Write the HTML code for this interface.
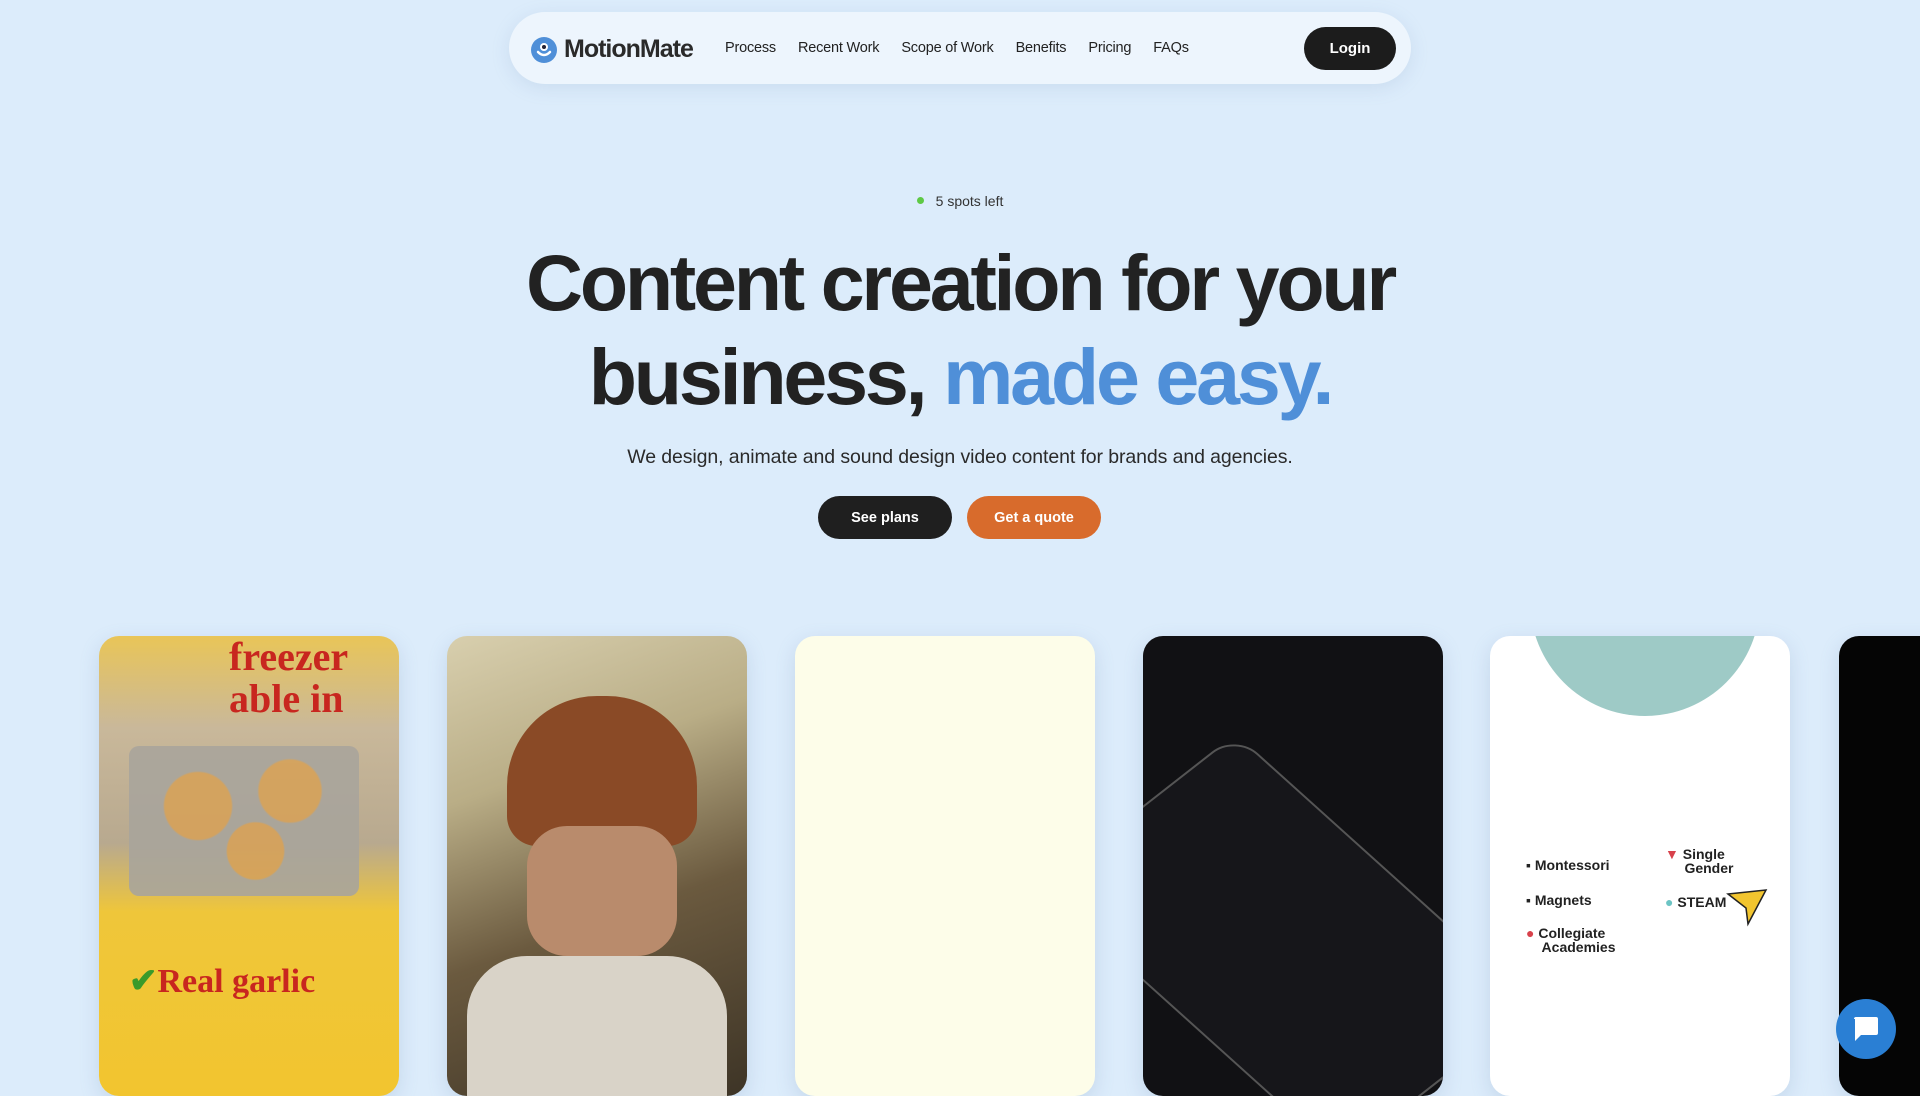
<!DOCTYPE html>
<html><head><meta charset="utf-8"><style>
*{margin:0;padding:0;box-sizing:border-box}
body{width:1920px;height:1080px;overflow:hidden;background:#dcecfb;font-family:"Liberation Sans",sans-serif;color:#222;position:relative}
.nav{position:absolute;left:509px;top:12px;width:902px;height:72px;border-radius:36px;background:#edf5fd;box-shadow:0 4px 18px rgba(120,150,190,.18)}
.logo{position:absolute;left:21px;top:23px;display:flex;align-items:center;font-weight:700;font-size:25px;letter-spacing:-1px;color:#2a2a2a}
.links{position:absolute;left:216px;top:28px;display:flex;gap:22px;font-size:14.5px;letter-spacing:-.2px;color:#222}
.login{position:absolute;right:15px;top:15px;width:92px;height:43px;border-radius:22px;background:#1c1c1c;color:#fff;font-weight:700;font-size:15px;display:flex;align-items:center;justify-content:center}
.spots{position:absolute;top:193px;left:0;width:1920px;text-align:center;font-size:14px;color:#333}
.spots span{display:inline-block;width:7px;height:7px;border-radius:50%;background:#5ec944;margin-right:12px;vertical-align:2px}
h1{position:absolute;left:0;width:1920px;text-align:center;font-size:79px;font-weight:700;letter-spacing:-3.2px;line-height:94px;top:236px;color:#222}
h1 em{font-style:normal;color:#4f8fd8}
.sub{position:absolute;top:446px;width:1920px;text-align:center;font-size:19.5px;letter-spacing:-.1px;color:#2a2a2a}
.btn{position:absolute;top:496px;height:43px;width:134px;border-radius:22px;color:#fff;font-weight:700;font-size:14.5px;display:flex;align-items:center;justify-content:center}
.card{position:absolute;top:636px;width:300px;height:460px;border-radius:20px;overflow:hidden;box-shadow:0 6px 20px rgba(100,130,170,.2)}
.chat{position:absolute;left:1836px;top:999px;width:60px;height:60px;border-radius:50%;background:#2a7fd4;display:flex;align-items:center;justify-content:center}
</style></head><body>
<div class="nav">
 <div class="logo"><svg width="28" height="28" viewBox="0 0 28 28" style="margin-right:6px"><circle cx="14" cy="14" r="13" fill="#4f8fd8"/><circle cx="14" cy="11" r="4" fill="#fff"/><circle cx="14" cy="11" r="2" fill="#223"/><path d="M8 16 q6 6 12 0" stroke="#fff" stroke-width="2.5" fill="none" stroke-linecap="round"/></svg>MotionMate</div>
 <div class="links"><span>Process</span><span>Recent Work</span><span>Scope of Work</span><span>Benefits</span><span>Pricing</span><span>FAQs</span></div>
 <div class="login">Login</div>
</div>
<div class="spots"><span></span>5 spots left</div>
<h1>Content creation for your<br>business, <em>made easy.</em></h1>
<div class="sub">We design, animate and sound design video content for brands and agencies.</div>
<div class="btn" style="left:818px;background:#1f1f1f">See plans</div>
<div class="btn" style="left:967px;background:#d86b2c">Get a quote</div>

<div class="card" style="left:99px;background:linear-gradient(180deg,#e9c558 0%,#c9b89a 20%,#b8a98f 45%,#efc63a 60%,#f2c52f 100%)">
 <div style="position:absolute;left:30px;top:110px;width:230px;height:150px;background:radial-gradient(circle at 30% 40%,#d6a25a 18%,transparent 19%),radial-gradient(circle at 70% 30%,#d6a25a 16%,transparent 17%),radial-gradient(circle at 55% 70%,#d6a25a 17%,transparent 18%),#a9a59c;border-radius:10px;opacity:.9"></div>
 <div style="position:absolute;left:130px;top:0;font-weight:700;font-size:40px;color:#c8261f;font-family:'Liberation Serif',serif;line-height:42px">freezer<br>able in</div>
 <div style="position:absolute;left:30px;top:325px;font-weight:700;font-size:34px;color:#c8261f;font-family:'Liberation Serif',serif"><span style="color:#3a9a2a">✔</span>Real garlic</div>
</div>
<div class="card" style="left:447px;background:linear-gradient(160deg,#d8cfae 0%,#b9ad86 30%,#6b5a3f 60%,#3d3426 100%)">
 <div style="position:absolute;left:60px;top:60px;width:190px;height:150px;border-radius:90px 90px 30px 30px;background:#8a4a26"></div>
 <div style="position:absolute;left:80px;top:190px;width:150px;height:130px;border-radius:40px;background:#b98b6c"></div>
 <div style="position:absolute;left:20px;top:320px;width:260px;height:160px;border-radius:60px 60px 0 0;background:#d9d3c8"></div>
</div>
<div class="card" style="left:795px;background:#fdfde9"></div>
<div class="card" style="left:1143px;background:#111114">
 <div style="position:absolute;left:20px;top:110px;width:250px;height:400px;border-radius:30px;border:2px solid #555;background:#16161a;transform:rotate(-38deg) skewX(10deg)"></div>
</div>
<div class="card" style="left:1490px;background:#fff;font-weight:700;font-size:14px;color:#222">
 <div style="position:absolute;left:40px;top:-150px;width:230px;height:230px;border-radius:50%;background:#9ecac6"></div>
 <div style="position:absolute;left:36px;top:221px">▪ Montessori</div>
 <div style="position:absolute;left:36px;top:256px">▪ Magnets</div>
 <div style="position:absolute;left:36px;top:290px;line-height:14px"><span style="color:#d8414b">●</span> Collegiate<br>&nbsp;&nbsp;&nbsp;&nbsp;Academies</div>
 <div style="position:absolute;left:175px;top:211px;line-height:14px"><span style="color:#d8414b">▼</span> Single<br>&nbsp;&nbsp;&nbsp;&nbsp;&nbsp;Gender</div>
 <div style="position:absolute;left:175px;top:258px"><span style="color:#6cc4c4">●</span> STEAM</div>
 <svg style="position:absolute;left:236px;top:252px" width="44" height="40"><path d="M2 6 L40 2 L22 36 L20 20 Z" fill="#f2c52f" stroke="#222" stroke-width="1.5"/></svg>
</div>
<div class="card" style="left:1839px;background:#050505"></div>
<div class="chat"><svg width="30" height="28" viewBox="0 0 30 28"><path d="M3 4 Q3 2 5 2 H25 Q27 2 27 4 V18 Q27 20 25 20 H10 L4 26 V4 Z" fill="#fff"/></svg></div>
</body></html>
